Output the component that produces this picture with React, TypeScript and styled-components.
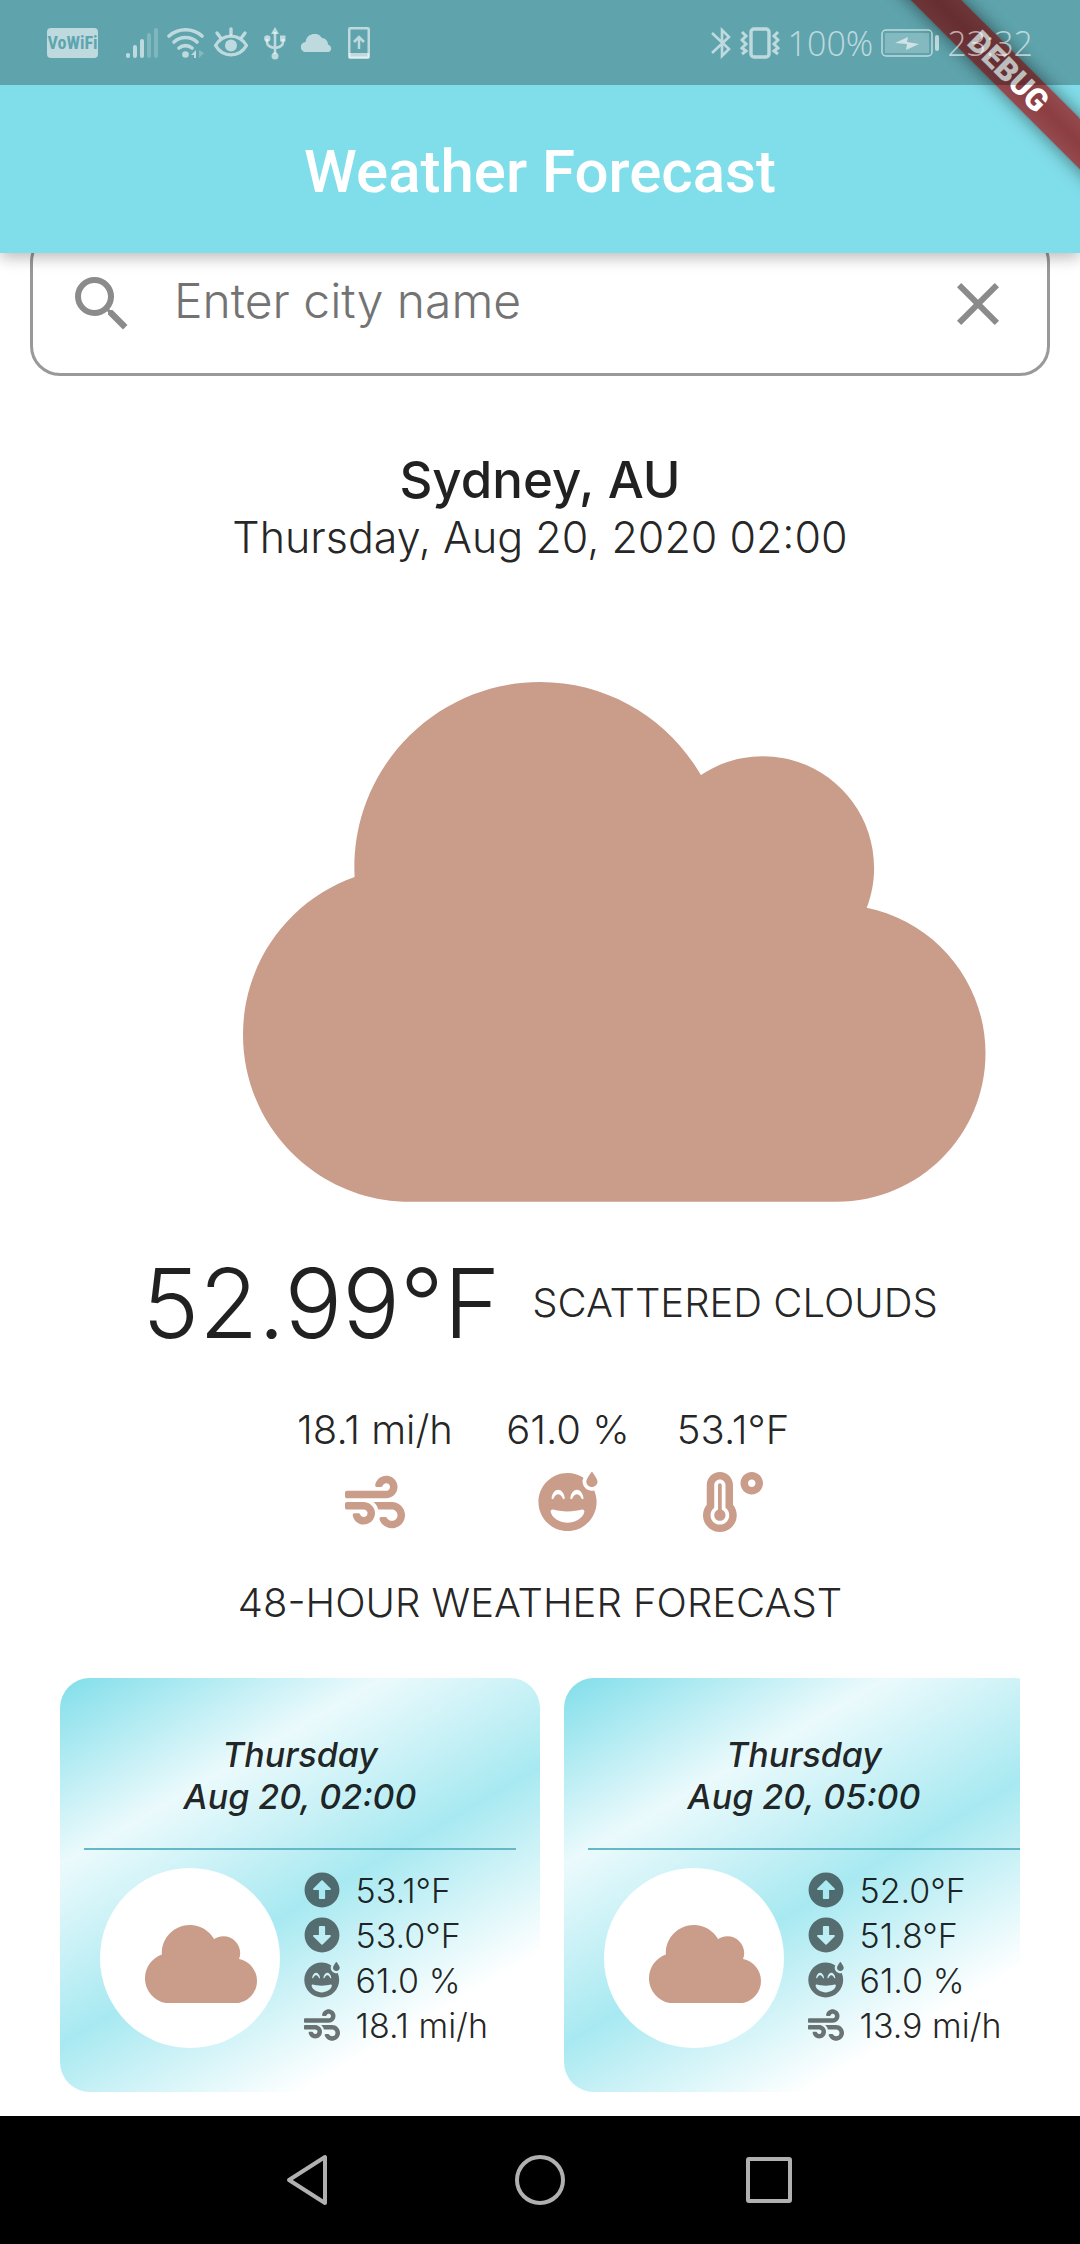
import React from "react";
import styled, { createGlobalStyle } from "styled-components";
import {
  FaArrowAltCircleDown,
  FaArrowAltCircleUp,
  FaGrinBeamSweat,
  FaTemperatureHigh,
  FaWind,
} from "react-icons/fa";
import { MdClose, MdSearch } from "react-icons/md";

const cyan = "#80deea";
const clay = "#ca9c8a";
const ink = "rgba(0, 0, 0, 0.87)";
const statusInk = "rgba(255, 255, 255, 0.6)";

const GlobalStyle = createGlobalStyle`
  * { box-sizing: border-box; }
  body {
    margin: 0;
    background: #fff;
    color: ${ink};
    font-family: Inter, Roboto, "Liberation Sans", sans-serif;
    font-weight: 300;
  }
  h1, h2, h3, p, ul, dl, dd { margin: 0; padding: 0; font-weight: inherit; }
  button { border: 0; padding: 0; background: none; color: inherit; }
  svg { display: block; flex: none; }
`;

const Screen = styled.div`
  position: relative;
  display: flex;
  flex-direction: column;
  min-height: 100vh;
  overflow: hidden;
`;

const Header = styled.header`
  position: relative;
  z-index: 1;
  background: ${cyan};
  box-shadow: 0 5px 14px rgba(0, 0, 0, 0.26);
`;

const StatusBar = styled.div`
  position: relative;
  z-index: 3;
  display: flex;
  justify-content: space-between;
  align-items: center;
  height: 85px;
  padding: 0 47px;
  background: rgba(0, 0, 0, 0.26);
  color: ${statusInk};
  font: 300 34px "Open Sans", "Noto Sans", sans-serif;
`;

const StatusGroup = styled.div<{ $gap: number }>`
  display: flex;
  align-items: center;
  gap: ${(p) => p.$gap}px;
`;

const CallBadge = styled.span`
  display: grid;
  place-items: center;
  width: 51px;
  height: 30px;
  border-radius: 4px;
  background: ${statusInk};
  color: #5ea5af;
  font: 700 18px/30px "Liberation Sans Narrow", "Roboto Condensed", sans-serif;
`;

const TitleBar = styled.div`
  display: flex;
  align-items: center;
  justify-content: center;
  height: 168px;
  padding-top: 4px;
  color: #fff;
`;

const Title = styled.h1`
  font: 500 60px Roboto, sans-serif;
`;

const BannerCorner = styled.div`
  position: absolute;
  z-index: 2;
  top: 0;
  right: 0;
  width: 240px;
  height: 240px;
  overflow: hidden;
  pointer-events: none;
`;

const BannerRibbon = styled.div`
  position: absolute;
  top: 54px;
  right: -78px;
  width: 300px;
  height: 36px;
  transform: rotate(45deg);
  background: linear-gradient(#934a4e, #8c3e42 50%, #934a4e);
  box-shadow: 0 0 18px rgba(0, 0, 0, 0.5);
  color: #fff;
  font: 900 31px/36px Roboto, sans-serif;
  text-align: center;
`;

const Main = styled.main`
  flex: 1;
  display: flex;
  flex-direction: column;
  align-items: center;
  overflow: hidden;
`;

const SearchBox = styled.form`
  display: flex;
  align-items: center;
  align-self: stretch;
  height: 144px;
  margin: -21px 30px 0;
  padding: 0 33px;
  border: 3px solid #999;
  border-radius: 30px;
  color: #8b8b8b;
`;

const IconButton = styled.button`
  display: grid;
  place-items: center;
  font-size: 72px;
`;

const SearchInput = styled.input`
  flex: 1;
  min-width: 0;
  margin: 0 36px;
  padding: 0 0 6px;
  border: 0;
  outline: 0;
  background: none;
  color: ${ink};
  font: inherit;
  font-size: 48px;
  line-height: 60px;
  &::placeholder {
    color: #737373;
    opacity: 1;
  }
`;

const City = styled.h2`
  margin-top: 72px;
  font-size: 51px;
  font-weight: 500;
  line-height: 64px;
`;

const CurrentDate = styled.p`
  font-size: 43px;
  line-height: 50px;
`;

const HeroIcon = styled.div`
  width: 55%;
  margin-top: 120px;
  color: ${clay};
  svg {
    width: 125%;
  }
`;

const Current = styled.section`
  display: flex;
  align-items: center;
  gap: 32px;
  margin-top: 41px;
`;

const Temperature = styled.p`
  font-size: 96px;
  line-height: 120px;
`;

const Caption = styled.p`
  font-size: 40px;
  line-height: 50px;
`;

const Metrics = styled.dl`
  display: grid;
  grid-template-columns: 166px 120px 110px;
  column-gap: 50px;
  margin-top: 42px;
`;

const Metric = styled.div`
  display: flex;
  flex-direction: column-reverse;
  align-items: center;
  gap: 17px;
  font-size: 40px;
  line-height: 50px;
  white-space: nowrap;
  dt {
    color: ${clay};
    font-size: 60px;
  }
`;

const SectionTitle = styled.h2`
  margin-top: 46px;
  font-size: 40px;
  line-height: 50px;
`;

const CardList = styled.ul`
  display: flex;
  align-self: stretch;
  gap: 24px;
  margin: 50px 60px 24px;
  overflow-x: auto;
  list-style: none;
  scrollbar-width: none;
`;

const Card = styled.li`
  flex: none;
  width: 480px;
  height: 414px;
  padding: 56px 24px 0;
  border-radius: 30px;
  background: linear-gradient(150deg, ${cyan}, #ebfafc 27%, #a8e9f1 53%, #fff 80%);
`;

const CardTitle = styled.h3`
  padding-bottom: 30px;
  border-bottom: 2px solid #64b9c6;
  font-size: 34px;
  font-style: italic;
  font-weight: 500;
  line-height: 42px;
  text-align: center;
`;

const CardBody = styled.div`
  display: flex;
  justify-content: center;
  gap: 24px;
  margin: 18px -12px 0;
`;

const Medallion = styled.div`
  display: grid;
  place-items: center start;
  flex: none;
  width: 180px;
  height: 180px;
  padding: 12px 0 0 45px;
  border-radius: 50%;
  background: #fff;
  color: ${clay};
  svg {
    width: 112px;
  }
`;

const Readings = styled.dl`
  display: flex;
  flex-direction: column;
  min-width: 197px;
`;

const Reading = styled.div`
  display: flex;
  align-items: center;
  gap: 16px;
  height: 45px;
  font-size: 34px;
  line-height: 45px;
  white-space: nowrap;
  dt {
    color: rgba(0, 0, 0, 0.54);
    font-size: 36px;
  }
`;

const NavBar = styled.nav`
  display: flex;
  align-items: center;
  justify-content: center;
  gap: 180px;
  height: 128px;
  background: #000;
  color: #b0b0b0;
`;

const Cloud = () => (
  <svg viewBox="0 32 640 448" fill="currentColor" role="img" aria-label="Scattered clouds">
    <path d="M537.6 226.6c4.1-10.7 6.4-22.4 6.4-34.6 0-53-43-96-96-96-19.7 0-38.1 6-53.3 16.2C367 64.2 315.3 32 256 32c-88.4 0-160 71.6-160 160 0 2.7.1 5.4.2 8.1C40.2 219.8 0 273.2 0 336c0 79.5 64.5 144 144 144h368c70.7 0 128-57.3 128-128 0-61.9-44-113.6-102.4-125.4z" />
  </svg>
);

const Signal = () => (
  <svg width="34" height="32" viewBox="0 0 34 32" fill="none" stroke="currentColor" strokeWidth="4" strokeLinecap="round">
    <path d="M3 28v1M10 20v9M17 14v15" />
    <path d="M24 8v21M31 3v26" opacity=".35" />
  </svg>
);

const Wifi = () => (
  <svg width="38" height="32" viewBox="0 0 38 32" fill="none" stroke="currentColor" strokeWidth="3.6" strokeLinecap="round">
    <path d="M2 9a25 25 0 0 1 33 0M7 15a17 17 0 0 1 23 0M12 21a10 10 0 0 1 13 0" />
    <circle cx="18.5" cy="27.500" r="3.300" fill="currentColor" stroke="none" />
    <path d="M24 28l5-5v8h-2v-3z" fill="currentColor" stroke="none" />
    <path d="M32 23v8l5-5z" fill="currentColor" stroke="none" opacity=".4" />
  </svg>
);

const Eye = () => (
  <svg width="36" height="32" viewBox="0 0 36 32" fill="none" stroke="currentColor" strokeWidth="3.400" strokeLinecap="round">
    <path d="M2.500 18.500C10 6 26 6 33.500 18.500 26 31 10 31 2.500 18.500z" strokeLinejoin="round" />
    <circle cx="18" cy="18.500" r="6" fill="currentColor" stroke="none" />
    <path d="M18 2v5M4 6l3 4M32 6l-3 4" />
  </svg>
);

const Usb = () => (
  <svg width="22" height="34" viewBox="0 0 22 34" fill="none" stroke="currentColor" strokeWidth="2.600">
    <path d="M11 28V6M3 13v3q0 5 8 6 8-1 8-6v-3" />
    <path d="M11 1l4 7H7z" fill="currentColor" stroke="none" />
    <circle cx="11" cy="30" r="3.500" fill="currentColor" stroke="none" />
    <circle cx="3.300" cy="12.500" r="3.200" fill="currentColor" stroke="none" />
    <path d="M16 9.500h5.500v6H16z" fill="currentColor" stroke="none" />
  </svg>
);

const StatusCloud = () => (
  <svg width="32" height="18" viewBox="0 0 32 18" fill="currentColor">
    <path d="M5 18a5 5 0 0 1-.5-10A9 9 0 0 1 21 4a6.500 6.500 0 0 1 6 6.500A4 4 0 0 1 28 18z" />
  </svg>
);

const PhoneUpdate = () => (
  <svg width="22" height="32" viewBox="0 0 22 32" fill="none" stroke="currentColor" strokeWidth="2.500">
    <rect x="1.250" y="1.250" width="19.500" height="29.500" rx="1" />
    <path d="M1 28.500h20" strokeWidth="5" />
    <path d="M11 22V10M6 15l5-5 5 5" />
  </svg>
);

const Bluetooth = () => (
  <svg width="21" height="32" viewBox="0 0 21 32" fill="none" stroke="currentColor" strokeWidth="2.600">
    <path d="M1 6l17 16-7 7V3l7 7L1 26" />
  </svg>
);

const Vibrate = () => (
  <svg width="40" height="32" viewBox="0 0 40 32" fill="none" stroke="currentColor" strokeWidth="3.400">
    <rect x="11" y="2" width="18" height="28" rx="3" />
    <path d="M2 5l4 4-4 4 4 4-4 4 4 3-4 3M38 5l-4 4 4 4-4 4 4 4-4 3 4 3" strokeWidth="3" />
  </svg>
);

const Battery = () => (
  <svg width="58" height="28" viewBox="0 0 58 28">
    <rect x="1" y="1" width="50" height="26" rx="4" fill="none" stroke="currentColor" strokeWidth="1.500" />
    <rect x="4" y="4" width="44" height="20" fill="currentColor" opacity=".4" />
    <path d="M14 14l13-6-1 5 12 2-13 6 1-6z" fill="currentColor" />
    <rect x="54" y="6" width="4" height="16" rx="2" fill="currentColor" />
  </svg>
);

const StatusHeader = () => (
  <Header>
    <StatusBar>
      <StatusGroup $gap={15}>
        <StatusGroup $gap={27}>
          <CallBadge>VoWiFi</CallBadge>
          <StatusGroup $gap={8}>
            <Signal />
            <Wifi />
            <Eye />
          </StatusGroup>
        </StatusGroup>
        <Usb />
        <StatusCloud />
        <PhoneUpdate />
      </StatusGroup>
      <StatusGroup $gap={8}>
        <Bluetooth />
        <Vibrate />
        <span>100%</span>
        <Battery />
        <time>23:32</time>
      </StatusGroup>
    </StatusBar>
    <TitleBar>
      <Title>Weather Forecast</Title>
    </TitleBar>
    <BannerCorner>
      <BannerRibbon>DEBUG</BannerRibbon>
    </BannerCorner>
  </Header>
);

const days = [
  { day: "Thursday", time: "Aug 20, 02:00", high: "53.1°F", low: "53.0°F", humidity: "61.0 %", wind: "18.1 mi/h" },
  { day: "Thursday", time: "Aug 20, 05:00", high: "52.0°F", low: "51.8°F", humidity: "61.0 %", wind: "13.9 mi/h" },
];

export default function App() {
  return (
    <>
      <GlobalStyle />
      <Screen>
        <StatusHeader />
        <Main>
          <SearchBox onSubmit={(e) => e.preventDefault()}>
            <IconButton type="submit" aria-label="Search">
              <MdSearch />
            </IconButton>
            <SearchInput aria-label="City" placeholder="Enter city name" />
            <IconButton type="reset" aria-label="Clear">
              <MdClose />
            </IconButton>
          </SearchBox>
          <City>Sydney, AU</City>
          <CurrentDate>Thursday, Aug 20, 2020 02:00</CurrentDate>
          <HeroIcon>
            <Cloud />
          </HeroIcon>
          <Current>
            <Temperature>52.99°F</Temperature>
            <Caption>SCATTERED CLOUDS</Caption>
          </Current>
          <Metrics>
            <Metric>
              <dt aria-label="Wind"><FaWind /></dt>
              <dd>18.1 mi/h</dd>
            </Metric>
            <Metric>
              <dt aria-label="Humidity"><FaGrinBeamSweat /></dt>
              <dd>61.0 %</dd>
            </Metric>
            <Metric>
              <dt aria-label="Temperature"><FaTemperatureHigh /></dt>
              <dd>53.1°F</dd>
            </Metric>
          </Metrics>
          <SectionTitle>48-HOUR WEATHER FORECAST</SectionTitle>
          <CardList>
            {days.map((d) => (
              <Card key={d.time}>
                <CardTitle>
                  {d.day}
                  <br />
                  {d.time}
                </CardTitle>
                <CardBody>
                  <Medallion>
                    <Cloud />
                  </Medallion>
                  <Readings>
                    <Reading>
                      <dt aria-label="High"><FaArrowAltCircleUp /></dt>
                      <dd>{d.high}</dd>
                    </Reading>
                    <Reading>
                      <dt aria-label="Low"><FaArrowAltCircleDown /></dt>
                      <dd>{d.low}</dd>
                    </Reading>
                    <Reading>
                      <dt aria-label="Humidity"><FaGrinBeamSweat /></dt>
                      <dd>{d.humidity}</dd>
                    </Reading>
                    <Reading>
                      <dt aria-label="Wind"><FaWind /></dt>
                      <dd>{d.wind}</dd>
                    </Reading>
                  </Readings>
                </CardBody>
              </Card>
            ))}
          </CardList>
        </Main>
        <NavBar>
          <button aria-label="Back">
            <svg width="50" height="54" viewBox="0 0 50 54" fill="none" stroke="currentColor" strokeWidth="4" strokeLinejoin="round">
              <path d="M40 4v46L4 27z" />
            </svg>
          </button>
          <button aria-label="Home">
            <svg width="50" height="50" viewBox="0 0 50 50" fill="none" stroke="currentColor" strokeWidth="4">
              <circle cx="25" cy="25" r="23" />
            </svg>
          </button>
          <button aria-label="Recent apps">
            <svg width="50" height="50" viewBox="0 0 50 50" fill="none" stroke="currentColor" strokeWidth="4">
              <rect x="3" y="4" width="42" height="42" rx="1" />
            </svg>
          </button>
        </NavBar>
      </Screen>
    </>
  );
}
